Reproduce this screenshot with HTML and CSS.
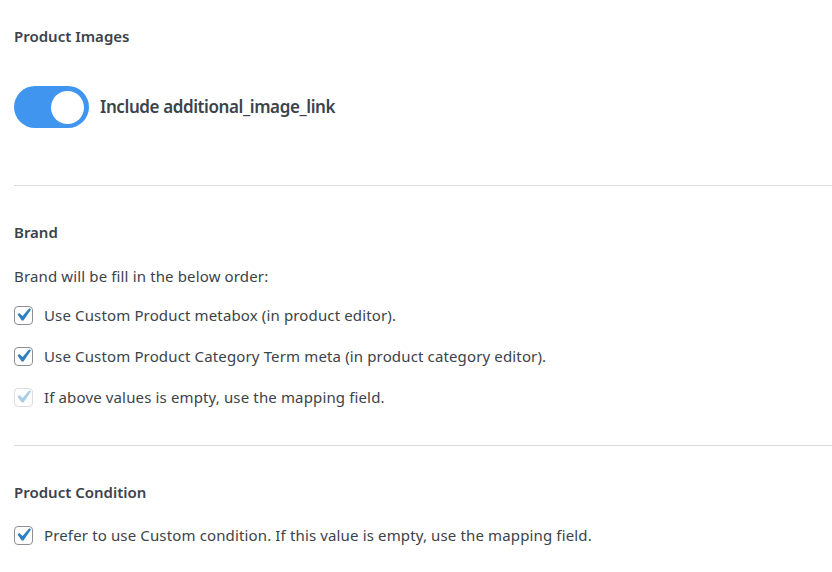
FILE: index.html
```html
<!DOCTYPE html>
<html lang="en">
<head>
    <meta charset="UTF-8">
    <title>Feed Settings</title>
    <link rel="stylesheet" href="styles.css">
</head>
<body>
    <div class="settings">
        <section class="section section-first">
            <h3 class="section-title">Product Images</h3>
            <label class="toggle-row">
                <span class="toggle"><span class="toggle-knob"></span></span>
                <span class="toggle-label">Include additional_image_link</span>
            </label>
        </section>

        <section class="section">
            <h3 class="section-title">Brand</h3>
            <p class="section-desc">Brand will be fill in the below order:</p>
            <div class="check-list">
                <label class="check-row">
                    <span class="check">
                        <svg viewBox="0 0 20 20"><path d="M14.83 4.89l1.34.94-5.81 8.38H9.02L5.78 9.67l1.34-1.25 2.57 2.4z"/></svg>
                    </span>
                    Use Custom Product metabox (in product editor).
                </label>
                <label class="check-row">
                    <span class="check">
                        <svg viewBox="0 0 20 20"><path d="M14.83 4.89l1.34.94-5.81 8.38H9.02L5.78 9.67l1.34-1.25 2.57 2.4z"/></svg>
                    </span>
                    Use Custom Product Category Term meta (in product category editor).
                </label>
                <label class="check-row">
                    <span class="check check-disabled">
                        <svg viewBox="0 0 20 20"><path d="M14.83 4.89l1.34.94-5.81 8.38H9.02L5.78 9.67l1.34-1.25 2.57 2.4z"/></svg>
                    </span>
                    If above values is empty, use the mapping field.
                </label>
            </div>
        </section>

        <section class="section section-last">
            <h3 class="section-title">Product Condition</h3>
            <div class="check-list">
                <label class="check-row">
                    <span class="check">
                        <svg viewBox="0 0 20 20"><path d="M14.83 4.89l1.34.94-5.81 8.38H9.02L5.78 9.67l1.34-1.25 2.57 2.4z"/></svg>
                    </span>
                    Prefer to use Custom condition. If this value is empty, use the mapping field.
                </label>
            </div>
        </section>
    </div>
</body>
</html>
```

FILE: styles.css
```css
/* Base */
* {
    margin: 0;
    padding: 0;
    box-sizing: border-box;
}

:root {
    --text: #3c434a;
    --blue: #4096ee;
    --check: #2f7fc1;
    --border: #dcdcde;
}

body {
    background: #fff;
    color: var(--text);
    font-family: "Noto Sans", "Open Sans", sans-serif;
    font-size: 15px;
    line-height: 20px;
    letter-spacing: 0.14px;
}

.settings {
    padding-left: 14px;
}

/* Sections */
.section {
    padding: 36px 0;
    border-bottom: 1px solid var(--border);
}

.section-first {
    padding: 26px 0 57px;
}

.section-last {
    border-bottom: none;
}

.section-title {
    font-size: 15px;
    font-weight: 600;
    line-height: 20px;
    letter-spacing: 0;
}

.section-desc {
    margin-top: 24px;
}

/* Toggle */
.toggle-row {
    display: flex;
    align-items: center;
    gap: 11px;
    margin-top: 40px;
}

.toggle {
    display: flex;
    align-items: center;
    justify-content: flex-end;
    width: 75px;
    height: 42px;
    padding: 0 5px;
    border-radius: 21px;
    background: var(--blue);
}

.toggle-knob {
    width: 33px;
    height: 33px;
    border-radius: 50%;
    background: #fff;
}

.toggle-label {
    font-size: 17px;
    font-weight: 600;
    letter-spacing: -0.4px;
}

/* Checkboxes */
.check-list {
    display: flex;
    flex-direction: column;
    gap: 17px;
    margin-top: 17px;
}

.section-last .check-list {
    margin-top: 21px;
}

.check-row {
    display: flex;
    align-items: center;
    gap: 11px;
    height: 24px;
}

.check {
    display: flex;
    align-items: center;
    justify-content: center;
    flex-shrink: 0;
    width: 19px;
    height: 19px;
    border: 1px solid #8c8f94;
    border-radius: 4px;
    background: #fff;
}

.check svg {
    flex-shrink: 0;
    width: 26px;
    height: 26px;
    margin-left: -1px;
    fill: var(--check);
}

.check-disabled {
    border-color: var(--border);
}

.check-disabled svg {
    fill: #a9cde6;
}
```
